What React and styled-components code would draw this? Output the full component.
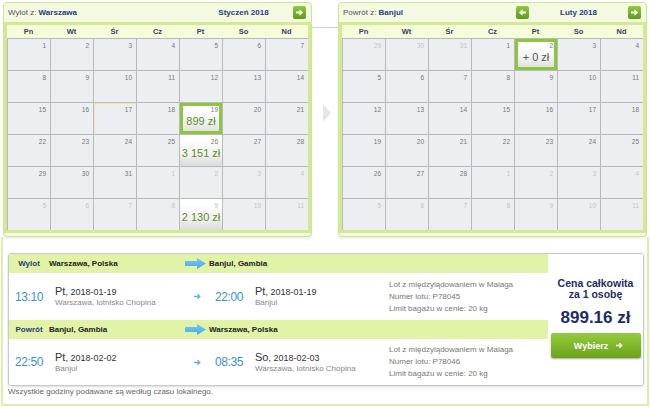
import React from "react";
import styled, { createGlobalStyle } from "styled-components";

const GlobalStyle = createGlobalStyle`
  body {
    margin: 0;
    background: #fff;
    font-family: "Liberation Sans", Arial, sans-serif;
  }
`;

const Widget = styled.div`
  width: 650px;
  height: 408px;
  box-sizing: border-box;
  padding-top: 2px;
`;

const Calendars = styled.div`
  display: flex;
  padding-left: 3px;
  height: 235px;
`;

const Panel = styled.div`
  width: 309px;
  height: 235px;
  box-sizing: border-box;
  border: 1px solid #cfe497;
  border-radius: 4px;
  background: #f4f9e2;
  box-shadow: 0 2px 2px rgba(0, 0, 0, 0.07);
  display: flex;
  flex-direction: column;
`;

const PanelHeader = styled.div`
  height: 19px;
  display: flex;
  align-items: center;
  padding: 0 5px 0 4px;
  font-size: 8px;
`;

const Title = styled.div`
  flex: 1;
  color: #555;
  b {
    color: #2a3b7c;
  }
`;

const Nav = styled.div`
  width: 125px;
  display: flex;
  align-items: center;
`;

const Month = styled.div`
  flex: 1;
  text-align: center;
  font-weight: bold;
  color: #2a3b7c;
`;

const NavButton = styled.div`
  width: 13px;
  height: 13px;
  border-radius: 2px;
  background: linear-gradient(#93c83f, #5f9a17);
  visibility: ${(p) => (p.$hidden ? "hidden" : "visible")};
  display: flex;
  svg {
    display: block;
  }
`;

const Frame = styled.div`
  border: 3px solid #d3ea92;
  background: #d3ea92;
`;

const WeekRow = styled.div`
  display: grid;
  grid-template-columns: repeat(7, 1fr);
  height: 13px;
  background: #f6fbdc;
  font-size: 7.5px;
  font-weight: bold;
  color: #3b4257;
  align-items: center;
  text-align: center;
`;

const Days = styled.div`
  display: grid;
  grid-template-columns: repeat(7, 42px);
  grid-auto-rows: 31px;
  gap: 1px;
  padding: 1px 0 0 1px;
  background: #b8b9bd;
`;

const Cell = styled.div`
  background: ${(p) =>
    p.$priced ? "linear-gradient(#ffffff 15%, #f2f2f2 60%, #dcdcdc)" : "#eceef2"};
  box-shadow: ${(p) =>
    p.$selected
      ? "inset 0 0 0 3px #8cc63f"
      : p.$today
      ? "inset 1px 1px 0 #f1e6b6"
      : "none"};
  display: flex;
  flex-direction: column;
`;

const DayNum = styled.div`
  font-size: 6.5px;
  line-height: 8px;
  text-align: right;
  padding: 3px 4px 0 0;
  color: ${(p) => (p.$out ? "#c4c5c9" : "#777")};
`;

const Price = styled.div`
  font-size: 11px;
  line-height: 13px;
  text-align: center;
  margin-top: 1px;
  color: ${(p) => (p.$neutral ? "#555" : "#5c8f1d")};
`;

const Connector = styled.div`
  width: 26px;
  display: flex;
  flex-direction: column;
`;

const Line = styled.div`
  margin-top: 25px;
  border-top: 1px solid #d4d4d4;
`;

const Chevron = styled.div`
  margin: 76px 0 0 11px;
  width: 0;
  height: 0;
  border-left: 8px solid #e3e5ea;
  border-top: 9px solid transparent;
  border-bottom: 9px solid transparent;
`;

const Bottom = styled.div`
  margin: 0 1px;
  height: 169px;
  box-sizing: border-box;
  border: 2px solid #dcefab;
  border-top: none;
  padding: 16px 4px 0 5px;
`;

const Table = styled.div`
  width: 636px;
  height: 133px;
  box-sizing: border-box;
  display: flex;
  border: 1px solid #c8c8c8;
  border-radius: 3px;
  box-shadow: 0 1px 3px rgba(0, 0, 0, 0.15);
  overflow: hidden;
`;

const Legs = styled.div`
  width: 539px;
  display: flex;
  flex-direction: column;
`;

const LegHead = styled.div`
  height: 19px;
  background: #e0f3a6;
  display: flex;
  align-items: center;
  font-size: 8px;
  font-weight: bold;
  color: #222;
`;

const LegLabel = styled.div`
  width: 40px;
  text-align: center;
  color: #2a3b7c;
`;

const City = styled.div`
  width: ${(p) => p.$w || "auto"};
`;

const HeadArrow = styled.div`
  width: 24px;
  display: flex;
  svg {
    display: block;
  }
`;

const LegBody = styled.div`
  height: ${(p) => p.$h}px;
  display: flex;
  align-items: center;
  background: #fff;
`;

const Time = styled.div`
  width: ${(p) => p.$w}px;
  text-align: center;
  font-size: 12px;
  letter-spacing: -0.4px;
  color: #3d8fd6;
`;

const DateBlock = styled.div`
  width: ${(p) => p.$w}px;
  box-sizing: border-box;
  padding-left: ${(p) => p.$pad}px;
  color: #333;
`;

const DateLine = styled.div`
  font-size: 9px;
  line-height: 12px;
  span {
    font-size: 11px;
  }
`;

const Place = styled.div`
  font-size: 8px;
  line-height: 10px;
  color: #888;
`;

const SmallArrow = styled.div`
  width: 25px;
  display: flex;
  justify-content: center;
  svg {
    display: block;
  }
`;

const Info = styled.div`
  font-size: 8px;
  line-height: 12px;
  color: #777;
`;

const PriceCol = styled.div`
  flex: 1;
  background: #fff;
  text-align: center;
  padding-top: 24px;
  color: #1d2b6b;
`;

const Total = styled.div`
  font-size: 10.5px;
  line-height: 11px;
  font-weight: bold;
`;

const Amount = styled.div`
  font-size: 17px;
  line-height: 20px;
  font-weight: bold;
  margin-top: 8px;
`;

const ChooseButton = styled.div`
  width: 90px;
  height: 25px;
  margin: 5px auto 0;
  border-radius: 2px;
  background: linear-gradient(#97cb3e, #6aa31c);
  box-shadow: 0 1px 2px rgba(0, 0, 0, 0.35);
  color: #fff;
  font-size: 9px;
  font-weight: bold;
  display: flex;
  align-items: center;
  justify-content: center;
  gap: 8px;
  padding-left: 6px;
  box-sizing: border-box;
`;

const Footer = styled.div`
  font-size: 8px;
  line-height: 12px;
  color: #666;
`;

const range = (a, b, extra = {}) =>
  Array.from({ length: b - a + 1 }, (_, i) => ({ d: a + i, ...extra }));

const january = [
  ...range(1, 16),
  { d: 17, today: true },
  { d: 18 },
  { d: 19, price: "899 zł", selected: true },
  ...range(20, 25),
  { d: 26, price: "3 151 zł" },
  ...range(27, 31),
  ...range(1, 8, { out: true }),
  { d: 9, out: true, price: "2 130 zł" },
  ...range(10, 11, { out: true }),
];

const february = [
  ...range(29, 31, { out: true }),
  { d: 1 },
  { d: 2, price: "+ 0 zł", selected: true, neutral: true },
  ...range(3, 28),
  ...range(1, 11, { out: true }),
];

const weekDays = ["Pn", "Wt", "Śr", "Cz", "Pt", "So", "Nd"];

function Arrow({ left }) {
  return (
    <svg width="13" height="13" viewBox="0 0 13 13">
      <path
        d="M3 5.5h3.5V3.2L10 6.5 6.5 9.8V7.5H3z"
        fill="#fff"
        transform={left ? "rotate(180 6.5 6.5)" : undefined}
      />
    </svg>
  );
}

function Calendar({ from, city, month, days, showPrev }) {
  return (
    <Panel>
      <PanelHeader>
        <Title>
          {from} z: <b>{city}</b>
        </Title>
        <Nav>
          <NavButton $hidden={!showPrev}>
            <Arrow left />
          </NavButton>
          <Month>{month}</Month>
          <NavButton>
            <Arrow />
          </NavButton>
        </Nav>
      </PanelHeader>
      <Frame>
        <WeekRow>
          {weekDays.map((w) => (
            <div key={w}>{w}</div>
          ))}
        </WeekRow>
        <Days>
          {days.map((c, i) => (
            <Cell key={i} $priced={!!c.price} $selected={c.selected} $today={c.today}>
              <DayNum $out={c.out}>{c.d}</DayNum>
              {c.price && <Price $neutral={c.neutral}>{c.price}</Price>}
            </Cell>
          ))}
        </Days>
      </Frame>
    </Panel>
  );
}

function BlueArrow() {
  return (
    <svg width="21" height="11" viewBox="0 0 21 11">
      <defs>
        <linearGradient id="ba" x1="0" y1="0" x2="0" y2="1">
          <stop offset="0" stopColor="#7cc7f2" />
          <stop offset="1" stopColor="#4aa9e6" />
        </linearGradient>
      </defs>
      <path d="M0 3h12V0l9 5.5-9 5.5V8H0z" fill="url(#ba)" />
    </svg>
  );
}

function TinyArrow({ color = "#5ab2ea" }) {
  return (
    <svg width="7" height="7" viewBox="0 0 7 7">
      <path d="M0 3.5h5.5M3.5 1.2l2.3 2.3-2.3 2.3" stroke={color} strokeWidth="1.3" fill="none" />
    </svg>
  );
}

function Leg({ label, from, to, dep, depDay, depDate, depPlace, arr, arrDay, arrDate, arrPlace, flight, h }) {
  return (
    <>
      <LegHead>
        <LegLabel>{label}</LegLabel>
        <City $w="136px">{from}</City>
        <HeadArrow>
          <BlueArrow />
        </HeadArrow>
        <City>{to}</City>
      </LegHead>
      <LegBody $h={h}>
        <Time $w={40}>{dep}</Time>
        <DateBlock $w={136} $pad={6}>
          <DateLine>
            <span>{depDay}</span>, {depDate}
          </DateLine>
          <Place>{depPlace}</Place>
        </DateBlock>
        <SmallArrow>
          <TinyArrow />
        </SmallArrow>
        <Time $w={38}>{arr}</Time>
        <DateBlock $w={141} $pad={7}>
          <DateLine>
            <span>{arrDay}</span>, {arrDate}
          </DateLine>
          <Place>{arrPlace}</Place>
        </DateBlock>
        <Info>
          Lot z międzylądowaniem w Malaga
          <br />
          Numer lotu: {flight}
          <br />
          Limit bagażu w cenie: 20 kg
        </Info>
      </LegBody>
    </>
  );
}

export default function App() {
  return (
    <Widget>
      <GlobalStyle />
      <Calendars>
        <Calendar from="Wylot" city="Warszawa" month="Styczeń 2018" days={january} />
        <Connector>
          <Line />
          <Chevron />
        </Connector>
        <Calendar from="Powrót" city="Banjul" month="Luty 2018" days={february} showPrev />
      </Calendars>
      <Bottom>
        <Table>
          <Legs>
            <Leg
              label="Wylot"
              from="Warszawa, Polska"
              to="Banjul, Gambia"
              dep="13:10"
              depDay="Pt"
              depDate="2018-01-19"
              depPlace="Warszawa, lotnisko Chopina"
              arr="22:00"
              arrDay="Pt"
              arrDate="2018-01-19"
              arrPlace="Banjul"
              flight="P78045"
              h={47}
            />
            <Leg
              label="Powrót"
              from="Banjul, Gambia"
              to="Warszawa, Polska"
              dep="22:50"
              depDay="Pt"
              depDate="2018-02-02"
              depPlace="Banjul"
              arr="08:35"
              arrDay="So"
              arrDate="2018-02-03"
              arrPlace="Warszawa, lotnisko Chopina"
              flight="P78046"
              h={46}
            />
          </Legs>
          <PriceCol>
            <Total>Cena całkowita</Total>
            <Total>za 1 osobę</Total>
            <Amount>899.16 zł</Amount>
            <ChooseButton>
              Wybierz
              <TinyArrow color="#fff" />
            </ChooseButton>
          </PriceCol>
        </Table>
        <Footer>Wszystkie godziny podawane są według czasu lokalnego.</Footer>
      </Bottom>
    </Widget>
  );
}
